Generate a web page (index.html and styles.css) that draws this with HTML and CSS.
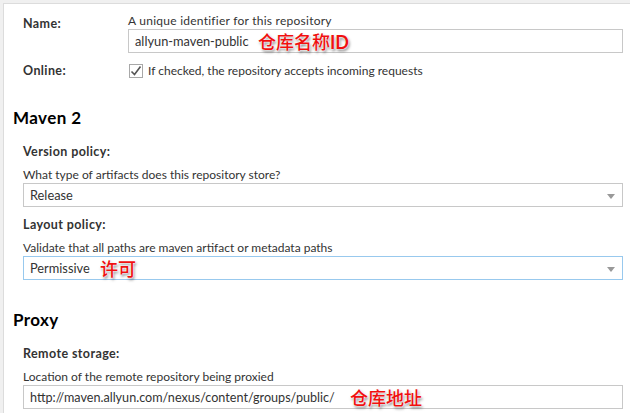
FILE: index.html
```html
<!DOCTYPE html>
<html>
<head>
<meta charset="utf-8">
<link rel="stylesheet" href="styles.css">
</head>
<body>
<div class="panel">
  <div class="row row-name">
    <div class="label label-side">Name:</div>
    <div class="field-col">
      <div class="help help-wide">A unique identifier for this repository</div>
      <div class="box">
        <span class="value">allyun-maven-public</span>
        <span class="note note-name">仓库名称<b>ID</b></span>
      </div>
    </div>
  </div>
  <div class="row row-online">
    <div class="label label-side">Online:</div>
    <div class="check-line">
      <svg class="checkbox" width="14" height="14" viewBox="0 0 14 14">
        <rect x="0.5" y="0.5" width="13" height="13" fill="#fff" stroke="#a8a8a8"/>
        <path d="M2.5 7.5 L5.5 10.5 L11.5 2.5" fill="none" stroke="#555" stroke-width="1.6"/>
      </svg>
      <span class="help">If checked, the repository accepts incoming requests</span>
    </div>
  </div>

  <h2 class="section first">Maven 2</h2>
  <div class="label block-label">Version policy:</div>
  <div class="help block-help">What type of artifacts does this repository store?</div>
  <div class="box select">
    <span class="value">Release</span>
    <span class="arrow"></span>
  </div>
  <div class="label block-label second">Layout policy:</div>
  <div class="help block-help">Validate that all paths are maven artifact or metadata paths</div>
  <div class="box select focused">
    <span class="value">Permissive</span>
    <span class="note note-perm">许可</span>
    <span class="arrow"></span>
  </div>

  <h2 class="section proxy">Proxy</h2>
  <div class="label block-label">Remote storage:</div>
  <div class="help block-help">Location of the remote repository being proxied</div>
  <div class="box">
    <span class="value url">http://maven.allyun.com/nexus/content/groups/public/</span>
    <span class="note note-url">仓库地址</span>
  </div>
</div>
</body>
</html>
```

FILE: styles.css
```css
html, body {
  margin: 0;
  padding: 0;
  background: #f0f0f0;
  height: 100%;
  overflow: hidden;
}
body {
  padding: 3px 0 0 3px;
  box-sizing: border-box;
  font-family: Lato, "Noto Sans", sans-serif;
  color: #333;
}
.panel {
  background: #fff;
  border-top: 1px solid #dcdcdc;
  border-left: 1px solid #dcdcdc;
  height: 100%;
  box-sizing: border-box;
  padding: 10px 7px 0 19px;
}
.row {
  display: flex;
}
.label {
  font-size: 12.5px;
  font-weight: bold;
  letter-spacing: 0.4px;
  line-height: 14px;
  color: #333;
}
.label-side {
  width: 105px;
  flex: none;
}
.row-name .label-side {
  padding-top: 3px;
}
.field-col {
  flex: 1;
}
.help {
  font-size: 12px;
  line-height: 14px;
  color: #333;
}
.help-wide {
  letter-spacing: 0.25px;
}
.box {
  position: relative;
  height: 24px;
  box-sizing: border-box;
  border: 1px solid #c8c8c8;
  margin-top: 1px;
  padding: 0 6px;
  display: flex;
  align-items: center;
  font-size: 12.8px;
  color: #333;
}
.value {
  white-space: nowrap;
}
.value.url {
  font-size: 12.6px;
}
.row-online {
  margin-top: 9px;
  height: 18px;
  align-items: center;
}
.check-line {
  display: flex;
  align-items: center;
  gap: 5px;
}
.checkbox {
  display: block;
  margin-left: 1px;
}
.section {
  margin: 0 0 0 -10px;
  font-size: 17px;
  letter-spacing: 0.4px;
  line-height: 20px;
  font-weight: bold;
  color: #000;
}
.section.first {
  margin-top: 28px;
}
.section.proxy {
  margin-top: 30px;
}
.block-label {
  margin-top: 17px;
}
.block-label.second {
  margin-top: 11px;
}
.block-help {
  margin-top: 9px;
}
.select .arrow {
  position: absolute;
  right: 7px;
  top: 10px;
  width: 0;
  height: 0;
  border-left: 4px solid transparent;
  border-right: 4px solid transparent;
  border-top: 5px solid #999;
}
.focused {
  border-color: #98c9ee;
}
.note {
  position: absolute;
  top: 1px;
  font-family: "Noto Sans CJK SC", sans-serif;
  font-size: 18px;
  line-height: 20px;
  color: #f01010;
  font-weight: 500;
  letter-spacing: 0;
  text-shadow: 0 0 2px #fff, 0 0 2px #fff, 1px 2px 3px rgba(0,0,0,0.55);
  white-space: nowrap;
}
.note b {
  font-family: Lato, sans-serif;
  font-weight: bold;
}
.note-name { left: 129px; }
.note-perm { left: 76px; }
.note-url { left: 326px; }
```
